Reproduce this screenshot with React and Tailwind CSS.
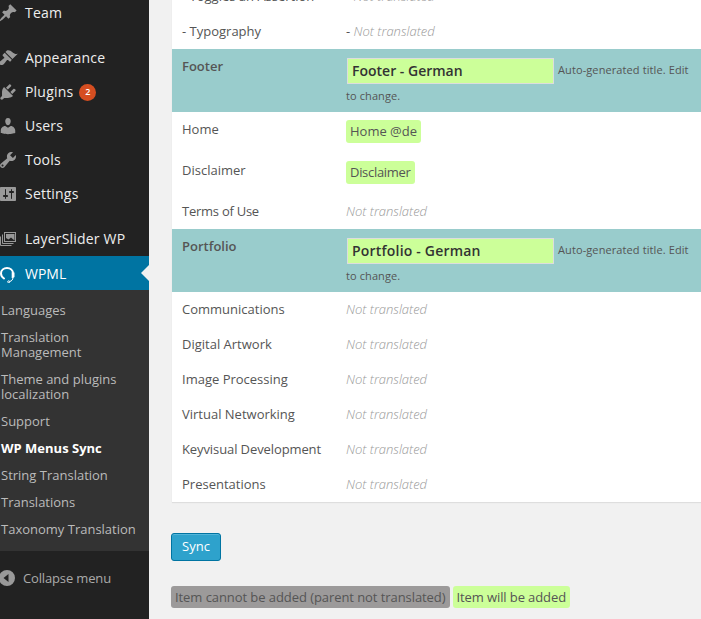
const Ico = ({ d }) => (
  <svg viewBox="0 0 20 20" className="w-full h-full" fill="currentColor"><path fillRule="evenodd" d={d} /></svg>
);
const Pin = () => <Ico d="M10.44 3.02l1.82-1.82 6.36 6.35-1.83 1.82c-1.05-.68-2.48-.57-3.41.36l-.75.75c-.92.93-1.04 2.35-.35 3.41l-1.83 1.82-2.41-2.41-2.8 2.79c-.42.42-3.38 2.71-3.8 2.29s1.86-3.39 2.28-3.81l2.79-2.79L4.1 9.36l1.83-1.82c1.05.69 2.48.57 3.41-.36l.75-.75c.93-.92 1.04-2.35.35-3.41z" />;
const Brush = () => <Ico d="M14.48 11.06L7.41 3.99l1.5-1.5c.5-.56 2.3-.47 3.51.32 1.21.8 1.43 1.28 2.91 2.1 1.18.64 2.45 1.26 4.45.85zm-.71.71L6.7 4.7 4.93 6.47c-.39.39-.39 1.02 0 1.41l1.06 1.06c.39.39.39 1.03 0 1.42-.6.6-1.43 1.11-2.21 1.69-.35.26-.7.53-1.01.84C1.43 13.23.4 14.91 1.86 16.37s3.14.43 4.48-.92c.31-.31.58-.66.85-1.01.57-.78 1.08-1.61 1.69-2.21.39-.39 1.02-.39 1.41 0l1.06 1.06c.39.39 1.02.39 1.41 0z" />;
const Plug = () => <Ico d="M13.11 4.36L9.87 7.6 8 5.73l3.24-3.24c.35-.34 1.05-.2 1.56.32.52.51.66 1.21.31 1.55zm-8 1.77l.91-1.12 9.01 9.01-1.19.84c-.71.71-2.63 1.16-3.82 1.16H6.14L4.9 17.26c-.59.59-1.54.59-2.12 0-.59-.58-.59-1.53 0-2.12l1.24-1.24v-3.88c0-1.13.4-3.19 1.09-3.89zm7.26 3.97l3.24-3.24c.34-.35 1.04-.21 1.55.31.52.51.66 1.21.31 1.55l-3.24 3.25z" />;
const User = () => <Ico d="M10 9.25c-2.27 0-2.73-3.44-2.73-3.44C7 4.02 7.82 2 9.97 2c2.16 0 2.98 2.02 2.71 3.81 0 0-.41 3.44-2.68 3.44zm0 2.57L12.72 10c2.39 0 4.52 2.33 4.52 4.53v2.49s-3.65 1.13-7.24 1.13c-3.65 0-7.24-1.13-7.24-1.13v-2.49c0-2.25 1.94-4.48 4.47-4.48z" />;
const Wrench = () => <Ico d="M16.68 9.77c-1.34 1.34-3.3 1.67-4.95.99l-5.41 6.52c-.99.99-2.59.99-3.58 0s-.99-2.59 0-3.57l6.52-5.42c-.68-1.65-.35-3.61.99-4.95 1.28-1.28 3.12-1.62 4.72-1.06l-2.89 2.89 2.82 2.82 2.86-2.87c.53 1.58.18 3.39-1.08 4.65zM3.81 16.21c.4.39 1.04.39 1.43 0 .4-.4.4-1.04 0-1.43-.39-.4-1.03-.4-1.43 0-.39.39-.39 1.03 0 1.43z" />;
const Sliders = () => <Ico d="M18 16V4c0-.55-.45-1-1-1H3c-.55 0-1 .45-1 1v12c0 .55.45 1 1 1h14c.55 0 1-.45 1-1zM8 11h1c.55 0 1 .45 1 1s-.45 1-1 1H8v1.500c0 .28-.22.5-.5.5s-.5-.22-.5-.5V13H6c-.55 0-1-.45-1-1s.45-1 1-1h1V5.500c0-.28.22-.5.5-.5s.5.22.5.5V11zm5-2h-1c-.55 0-1-.45-1-1s.45-1 1-1h1V5.500c0-.28.22-.5.5-.5s.5.22.5.5V7h1c.55 0 1 .45 1 1s-.45 1-1 1h-1v5.500c0 .28-.22.5-.5.5s-.5-.22-.5-.5V9z" />;
const Images = () => (
  <svg viewBox="0 0 20 20" className="w-full h-full" fill="none" stroke="currentColor">
    <rect x="6.500" y="3.500" width="11" height="9" strokeWidth="1" />
    <path fill="currentColor" stroke="none" d="M8 5h8.500v6.500l-3.500-3-2.500 2-2.500-1.500L8 9.500z" />
    <path strokeWidth="1" d="M4.500 5.500v9h11M2.500 7.500v9h11" />
  </svg>
);
const Headset = () => (
  <svg viewBox="0 0 20 20" className="w-full h-full" fill="none" stroke="currentColor">
    <path strokeWidth="2" strokeLinecap="round" d="M5 15.500C2.800 14 2 12.500 2 10.500 2 7 4.800 5 8 5s6 2 6 5.500" />
    <path fill="currentColor" stroke="none" d="M12.700 9.500h2.800v4.500c-.8 1-2 1.300-2.800 1z" />
    <path strokeWidth="1" d="M14 14.500c-.2 2.200-1.200 3.500-3.300 4" />
    <circle cx="9.700" cy="18.800" r="1" strokeWidth="1" />
  </svg>
);
const Collapse = () => (
  <svg viewBox="0 0 20 20" className="w-full h-full" fill="currentColor"><path fillRule="evenodd" d="M10 2a8 8 0 1 1 0 16 8 8 0 0 1 0-16zM11.500 6L6.500 10l5 4z" transform="translate(-3 0)" /></svg>
);

const menuItem = (label, Icon, extra) => (
  <div className="h-[34px] flex items-center relative" key={label}>
    <span className="absolute left-[-2px] top-[7px] w-5 h-5 text-[#999]"><Icon /></span>
    <span className="pl-[25px] pb-[2px] text-[14px] tracking-[0.2px] text-[#eee]">{label}</span>
    {extra}
  </div>
);

const sub = [
  ["Languages"],
  ["Translation Management"],
  ["Theme and plugins localization"],
  ["Support"],
  ["WP Menus Sync", true],
  ["String Translation"],
  ["Translations"],
  ["Taxonomy Translation"],
];

const NT = () => <em className="text-[#999] font-light">Not translated</em>;

const Row = ({ label, h = "h-[35px]", labelClass = "", children }) => (
  <div className={`flex ${h} items-center text-[13px] text-[#555]`}>
    <div className={`w-[174px] pl-[10px] shrink-0 whitespace-nowrap ${labelClass}`}>{label}</div>
    <div>{children}</div>
  </div>
);

const Pill = ({ className = "", children }) => (
  <span className={`block mb-[2px] bg-[#ccff99] rounded-[3px] px-1 h-[23px] leading-[23px] text-[13px] ${className}`}>{children}</span>
);

const Head = ({ title, value, valueClass = "" }) => (
  <div className="flex h-[63px] bg-[#99cccc] text-[#555]">
    <div className="w-[174px] pl-[10px] pt-[8px] shrink-0 text-[13px] font-semibold">{title}</div>
    <div className="w-[352px] text-[11px] leading-[23px] pt-[9px]">
      <span className={`inline-block align-middle ml-px w-[207px] h-[26px] -mb-px -translate-y-px bg-[#ccff99] border-[1px] border-[#ddd] pl-[4px] text-[14px] leading-[24px] font-semibold text-[#333] mr-[4px] ${valueClass}`}>{value}</span>
      <span className="text-[11px] tracking-[0.1px]">Auto-generated title. Edit to change.</span>
    </div>
  </div>
);

export default function App() {
  return (
    <div className="h-[619px] w-[701px] overflow-hidden flex bg-[#f1f1f1] font-['Open_Sans',sans-serif]">
      <div className="w-[149px] shrink-0 bg-[#222] h-full">
        <div className="-mt-[4px]">
          {menuItem("Team", Pin)}
          <div className="h-[11px]" />
          {menuItem("Appearance", Brush)}
          {menuItem("Plugins", Plug, <span className="ml-[6px] w-[17px] h-[17px] rounded-full bg-[#d54e21] text-white text-[9px] font-semibold flex items-center justify-center">2</span>)}
          {menuItem("Users", User)}
          {menuItem("Tools", Wrench)}
          {menuItem("Settings", Sliders)}
          <div className="h-[11px]" />
          {menuItem("LayerSlider WP", Images)}
          <div className="h-[34px] flex items-center relative bg-[#0074a2]">
            <span className="absolute left-[-1px] top-[7px] w-5 h-5 text-white"><Headset /></span>
            <span className="pl-[25px] text-[14px] text-white">WPML</span>
            <span className="absolute right-0 top-[9px] border-y-[8px] border-y-transparent border-r-[8px] border-r-[#f1f1f1]" />
          </div>
          <div className="bg-[#333] pt-[7px] pb-[8px]">
            {sub.map(([t, b]) => (
              <div key={t} className={`pl-[1px] pr-[8px] py-[6px] text-[13px] leading-[15px] ${b ? "font-bold text-white" : "text-[#bbb]"}`}>{t}</div>
            ))}
          </div>
          <div className="flex items-center relative mt-[17px] h-[20px]">
            <span className="absolute left-0 top-0 w-5 h-5 text-[#999]"><Collapse /></span>
            <span className="pl-[23px] text-[13px] tracking-[-0.15px] text-[#aaa] pt-[1px]">Collapse menu</span>
          </div>
        </div>
      </div>
      <div className="flex-1 min-w-0">
        <div className="ml-[23px] -mt-[21px] bg-white shadow-[0_1px_1px_rgba(0,0,0,0.08)]">
          <Row label="- Toggles an Assertion"><span>- <NT /></span></Row>
          <Row label="- Typography"><span>- <NT /></span></Row>
          <Head title="Footer" value="Footer - German" />
          <Row label="Home" h="h-[41px]" labelClass="pb-[6px]"><Pill>Home @de</Pill></Row>
          <Row label="Disclaimer" h="h-[41px]" labelClass="pb-[6px]"><Pill className="tracking-[-0.3px]">Disclaimer</Pill></Row>
          <Row label="Terms of Use" labelClass="tracking-[-0.25px]"><NT /></Row>
          <Head title="Portfolio" value="Portfolio - German" valueClass="tracking-[0.2px]" />
          <Row label="Communications"><NT /></Row>
          <Row label="Digital Artwork"><NT /></Row>
          <Row label="Image Processing"><NT /></Row>
          <Row label="Virtual Networking"><NT /></Row>
          <Row label="Keyvisual Development" labelClass="tracking-[-0.1px]"><NT /></Row>
          <Row label="Presentations"><NT /></Row>
        </div>
        <button className="block ml-[22px] mt-[31px] w-[50px] h-[28px] bg-[#2ea2cc] border border-[#0074a2] rounded-[3px] text-white text-[13px] shadow-[inset_0_1px_0_rgba(120,200,230,0.5)]">Sync</button>
        <div className="ml-[22px] mt-[25px] flex gap-[3px] text-[13px] text-[#555]">
          <span className="bg-[#9c9a9a] rounded-[3px] px-1 h-[22px] leading-[22px] tracking-[-0.07px]">Item cannot be added (parent not translated)</span>
          <span className="bg-[#ccff99] rounded-[3px] px-1 h-[22px] leading-[22px] tracking-[-0.1px]">Item will be added</span>
        </div>
      </div>
    </div>
  );
}
